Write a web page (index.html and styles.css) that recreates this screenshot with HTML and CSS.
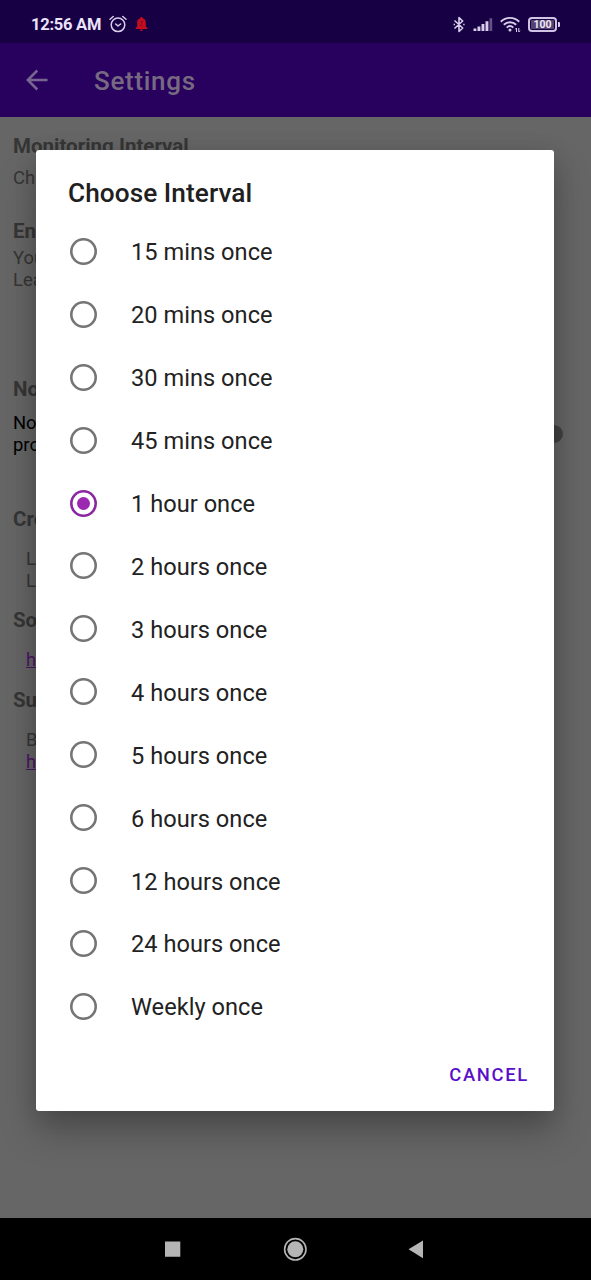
FILE: index.html
```html
<!DOCTYPE html>
<html lang="en">
<head>
<meta charset="utf-8">
<title>Settings</title>
<link rel="stylesheet" href="styles.css">
</head>
<body>
<div class="screen">
  <header class="status">
    <span class="clock">12:56 AM</span>
    <svg class="alarm" width="18" height="18" viewBox="0 0 18 18" fill="none" stroke="#d8cdea" stroke-width="1.5" stroke-linecap="round" stroke-linejoin="round"><circle cx="9" cy="9.8" r="6.8"/><path d="M1 4.2 4.2 1.5M17 4.2 13.8 1.5M6.7 9l2.3 2 2.6-2"/></svg>
    <svg class="bell" width="13" height="16" viewBox="0 0 13 16"><path fill="#c40d1e" d="M6.5 1c.8 0 1.2.5 1.2 1.2 2.2.6 3.1 2.300 3.100 4.300v3.700l1.500 1.700v1H.7v-1l1.500-1.700V6.500c0-2 .9-3.700 3.100-4.300C5.300 1.500 5.700 1 6.500 1zM5 13.600h3c0 .9-.6 1.500-1.500 1.500S5 14.500 5 13.600z"/><path stroke="#8d0a25" stroke-width="1" fill="none" d="M5.200 5.500h2.600L5.200 9.500h2.600"/></svg>
    <span class="spacer"></span>
    <svg class="bluetooth" width="12" height="17" viewBox="0 0 12 17" fill="none" stroke="#d8cdea" stroke-width="1.600" stroke-linejoin="round"><path d="M1.500 4.500 9.700 12 6 15.500v-14L9.700 5 1.500 12.500"/><path d="M.6 8.500h1.400M10.200 8.500h1.400" stroke-width="1.600"/></svg>
    <svg class="signal" width="20" height="15" viewBox="0 0 20 15" fill="#d8cdea"><path d="M.5 11.500h2.900V14H.5zM4.500 9.500h2.900V14H4.500zM8.500 7h2.900v7H8.500zM12.500 4.200h2.900V14h-2.900z"/><path opacity=".4" d="M16.500 1.200h2.700V14h-2.700z"/></svg>
    <svg class="wifi" width="21" height="17" viewBox="0 0 21 17" fill="none" stroke="#d8cdea" stroke-width="1.900"><path d="M.8 5.700c5.200-5.100 13.200-5.100 18.400 0M3.800 8.800c3.600-3.400 8.800-3.400 12.400 0M6.700 11.600c2-1.900 4.600-1.900 6.600 0"/><circle cx="10" cy="13.900" r="1.500" fill="#d8cdea" stroke="none"/><path stroke-width="1" d="M16.500 16v-4l-1.200 1.300M18.800 12v4l1.200-1.300"/></svg>
    <span class="battery"><span class="level">100</span></span>
  </header>
  <div class="appbar">
    <svg width="22" height="22" viewBox="0 0 22 22" fill="none" stroke="#77668f" stroke-width="2.500"><path d="M21.500 11H2M11.300 1.500 1.800 11l9.500 9.500"/></svg>
    <h1>Settings</h1>
  </div>
  <main class="content">
    <section class="group monitoring"><h2>Monitoring Interval</h2><p>Ch</p></section>
    <section class="group enable"><h2>En</h2><p>You<br>Lea</p></section>
    <section class="group notify"><h2>No</h2><div class="switch-row"><p>No<br>pro</p><span class="thumb"></span></div></section>
    <section class="group credits"><h2>Cre</h2><p>L<br>L</p></section>
    <section class="group source"><h2>So</h2><p><a>h</a></p></section>
    <section class="group support"><h2>Su</h2><p>B<br><a>h</a></p></section>
  </main>
  <footer class="nav">
    <svg width="591" height="62" viewBox="0 0 591 62" fill="#b5b5b5"><path d="M165 23.500h15.300v15.300H165zM423 22.500v17.700L408.500 31.300z"/><circle cx="295.300" cy="31.300" r="8"/><circle cx="295.300" cy="31.300" r="10.700" fill="none" stroke="#b5b5b5" stroke-width="1.600"/></svg>
  </footer>
  <div class="dialog">
    <h3>Choose Interval</h3>
    <ul class="options">
      <li><i></i><span>15 mins once</span></li>
      <li><i></i><span>20 mins once</span></li>
      <li><i></i><span>30 mins once</span></li>
      <li><i></i><span>45 mins once</span></li>
      <li class="selected"><i></i><span>1 hour once</span></li>
      <li><i></i><span>2 hours once</span></li>
      <li><i></i><span>3 hours once</span></li>
      <li><i></i><span>4 hours once</span></li>
      <li><i></i><span>5 hours once</span></li>
      <li><i></i><span>6 hours once</span></li>
      <li><i></i><span>12 hours once</span></li>
      <li><i></i><span>24 hours once</span></li>
      <li><i></i><span>Weekly once</span></li>
    </ul>
    <button class="cancel">CANCEL</button>
  </div>
</div>
</body>
</html>
```
FILE: styles.css
```css
* { box-sizing: border-box; margin: 0; padding: 0; }
body { font-family: Roboto, sans-serif; background: #666; }
.screen { position: relative; width: 591px; height: 1280px; overflow: hidden; display: flex; flex-direction: column; }

.status { height: 43px; background: #180045; display: flex; align-items: center; padding: 5px 34px 0 31px; flex: none; }
.clock { font-size: 16.5px; font-weight: 700; color: #ece4f8; line-height: 20px; width: 71px; padding-top: 1px; letter-spacing: -.25px; white-space: nowrap; }
.alarm { margin-left: 7px; }
.bell { margin-left: 8px; }
.spacer { flex: 1; }
.signal { margin-left: 8px; }
.wifi { margin-left: 7px; }
.battery { position: relative; margin-left: 7px; width: 29px; height: 15px; border: 2px solid #d0c4e4; border-radius: 4px; padding: 1px; }
.battery::after { content: ""; position: absolute; right: -5px; top: 3px; width: 2px; height: 5px; background: #d8cdea; border-radius: 0 1px 1px 0; }
.level { display: block; height: 100%; background: #54436f; border-radius: 1px; color: #f0eafa; font-size: 10.500px; font-weight: 700; line-height: 9.500px; text-align: center; }

.appbar { height: 74px; background: #28005e; display: flex; align-items: center; padding-left: 26px; flex: none; }
.appbar h1 { margin-left: 46px; font-size: 26px; font-weight: 500; color: #776a80; letter-spacing: .7px; line-height: 32px; padding-top: 2px; }

.content { flex: 1; background: #666; padding: 17px 13px 0; color: #363636; font-size: 18.400px; line-height: 22px; }
.group h2 { font-size: 20.500px; font-weight: 700; line-height: 24px; color: #363636; }
.monitoring p { padding-top: 9px; }
.enable { margin-top: 30px; }
.enable p { padding-top: 4px; }
.notify { margin-top: 86px; }
.switch-row { display: flex; justify-content: space-between; align-items: center; padding-top: 11px; color: #000; }
.thumb { width: 18px; height: 18px; margin-right: 15px; border-radius: 50%; background: #424242; }
.credits { margin-top: 51px; }
.credits p, .source p, .support p { padding: 17px 0 0 13px; }
.source { margin-top: 16px; }
.support { margin-top: 17px; }
.content a { color: #4f146b; text-decoration: underline; }

.nav { height: 62px; background: #000; flex: none; }
.nav svg { display: block; }

.dialog { position: absolute; left: 36px; top: 150px; width: 518px; height: 961px; background: #fff; border-radius: 3px; padding-top: 26px; box-shadow: 0 20px 36px rgba(0,0,0,.25), 0 4px 22px rgba(0,0,0,.12); display: flex; flex-direction: column; }
.dialog h3 { padding-left: 32px; font-size: 26.200px; font-weight: 500; line-height: 34px; letter-spacing: .07px; color: #202020; }
.options { list-style: none; margin-top: 10px; }
.options li { height: 62.920px; display: flex; align-items: center; padding-left: 34px; font-size: 23.600px; color: #222; }
.options i { width: 27px; height: 27px; box-shadow: inset 0 0 0 2.600px #757575; border-radius: 50%; flex: none; display: flex; align-items: center; justify-content: center; }
.options span { margin-left: 34px; padding-top: 2px; letter-spacing: .03px; }
.options .selected i { box-shadow: inset 0 0 0 2.600px #8c27a2; }
.selected i::after { content: ""; width: 13px; height: 13px; border-radius: 50%; background: #9c27b0; }
.cancel { align-self: flex-end; margin: 25px 25px 0 0; border: 0; background: none; font-family: inherit; font-size: 18.400px; font-weight: 500; letter-spacing: 1.700px; line-height: 24px; color: #5a0fc8; }
```
